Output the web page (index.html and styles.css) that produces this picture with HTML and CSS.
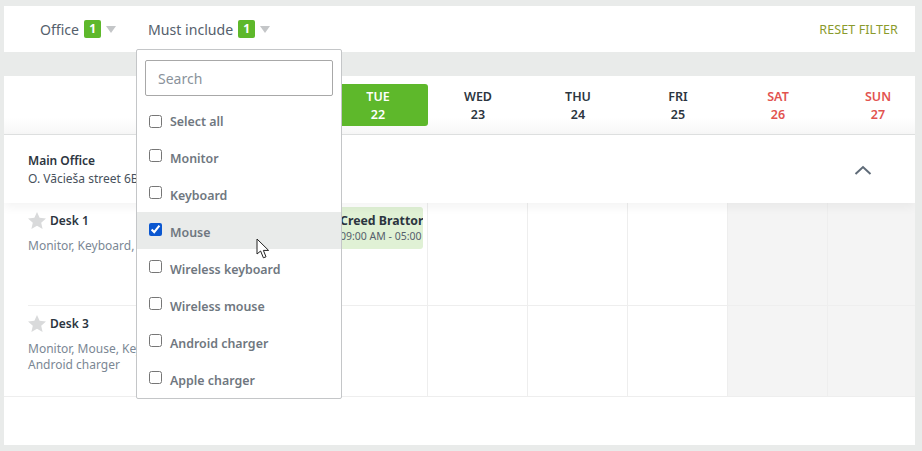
FILE: index.html
```html
<!DOCTYPE html>
<html lang="en">
    <head>
        <meta charset="UTF-8">
        <title>Desk booking</title>
        <link rel="stylesheet" href="styles.css">
    </head>
    <body>
        <div class="filters">
            <div class="filter">Office <span class="count">1</span><span class="caret"></span></div>
            <div class="filter">Must include <span class="count">1</span><span class="caret"></span></div>
            <a class="reset">RESET FILTER</a>
        </div>

        <div class="board">
            <div class="days">
                <div class="day-spacer"></div>
                <div class="day">MON<br>21</div>
                <div class="day today">TUE<br>22</div>
                <div class="day">WED<br>23</div>
                <div class="day">THU<br>24</div>
                <div class="day">FRI<br>25</div>
                <div class="day weekend">SAT<br>26</div>
                <div class="day weekend">SUN<br>27</div>
            </div>

            <div class="office">
                <div>
                    <div class="office-name">Main Office</div>
                    <div class="office-address">O. Vācieša street 6B</div>
                </div>
                <svg class="chevron" width="18" height="10" viewBox="0 0 18 10"><path d="M1.5 9 L9 2 L16.5 9" fill="none" stroke="#5f6b78" stroke-width="2"/></svg>
            </div>

            <div class="desk desk-first">
                <div class="desk-info">
                    <div class="desk-name"><svg class="star" width="18" height="17" viewBox="0 0 18 17"><path d="M9 0 L11.6 5.8 L18 6.5 L13.2 10.7 L14.6 17 L9 13.7 L3.4 17 L4.8 10.7 L0 6.5 L6.4 5.8 Z" fill="#d9dadb"/></svg><span class="desk-label">Desk 1</span></div>
                    <div class="desk-items">Monitor, Keyboard, Mouse</div>
                </div>
                <div class="cell"></div>
                <div class="cell">
                    <div class="booking">
                        <div class="booking-name">Creed Brattor</div>
                        <div class="booking-time">09:00 AM - 05:00</div>
                    </div>
                </div>
                <div class="cell"></div>
                <div class="cell"></div>
                <div class="cell"></div>
                <div class="cell off"></div>
                <div class="cell off"></div>
            </div>

            <div class="desk desk-last">
                <div class="desk-info">
                    <div class="desk-name"><svg class="star" width="18" height="17" viewBox="0 0 18 17"><path d="M9 0 L11.6 5.8 L18 6.5 L13.2 10.7 L14.6 17 L9 13.7 L3.4 17 L4.8 10.7 L0 6.5 L6.4 5.8 Z" fill="#d9dadb"/></svg><span class="desk-label">Desk 3</span></div>
                    <div class="desk-items">Monitor, Mouse, Keyboard,<br>Android charger</div>
                </div>
                <div class="cell"></div>
                <div class="cell"></div>
                <div class="cell"></div>
                <div class="cell"></div>
                <div class="cell"></div>
                <div class="cell off"></div>
                <div class="cell off"></div>
            </div>
        </div>

        <div class="dropdown">
            <div class="search-wrap">
                <input class="search" type="text" placeholder="Search">
            </div>
            <label class="option option-all"><input type="checkbox">Select all</label>
            <label class="option"><input type="checkbox">Monitor</label>
            <label class="option"><input type="checkbox">Keyboard</label>
            <label class="option active"><input type="checkbox" checked>Mouse</label>
            <label class="option"><input type="checkbox">Wireless keyboard</label>
            <label class="option"><input type="checkbox">Wireless mouse</label>
            <label class="option"><input type="checkbox">Android charger</label>
            <label class="option"><input type="checkbox">Apple charger</label>
        </div>

        <svg class="pointer" width="14" height="21" viewBox="0 0 14 21"><path d="M1 1 L1 16 L4.6 13 L7.4 19.8 L10 18.8 L7.4 12.4 L12.6 12.4 Z" fill="#fff" stroke="#222" stroke-width="1"/></svg>
    </body>
</html>
```

FILE: styles.css
```css
* {
    box-sizing: border-box;
}

body {
    margin: 0;
    padding: 6px 7px 6px 4px;
    height: 451px;
    overflow: hidden;
    background: #e9ebea;
    font-family: "Noto Sans", sans-serif;
    font-size: 12px;
    color: #2c3540;
}

.filters {
    display: flex;
    align-items: center;
    height: 46px;
    padding: 0 17px 0 36px;
    background: white;
}
.filter {
    display: flex;
    align-items: center;
    margin-right: 32px;
    font-size: 14.1px;
    color: #55606c;
}
.count {
    width: 17px;
    margin-left: 5px;
    height: 18px;
    line-height: 18px;
    text-align: center;
    border-radius: 2px;
    background: #5eb82b;
    color: white;
    font-size: 12px;
    font-weight: 700;
}
.caret {
    margin-left: 5px;
    border-left: 5.5px solid transparent;
    border-right: 5.5px solid transparent;
    border-top: 7px solid #c4c6c8;
}
.reset {
    margin-left: auto;
    font-size: 12.5px;
    letter-spacing: 0.1px;
    color: #8a9a2c;
}

.board {
    margin-top: 24px;
    height: 369px;
    overflow: hidden;
    background: white;
}

.days, .desk {
    display: grid;
    grid-template-columns: 224px repeat(7, 100px);
}
.days {
    height: 59px;
    padding-top: 8px;
    border-bottom: 1px solid #dfe1e1;
    background: linear-gradient(white 42px, #f7f7f7);
}
.day {
    height: 42px;
    padding-top: 4px;
    text-align: center;
    font-size: 12.5px;
    line-height: 18px;
    font-weight: 600;
    border-radius: 3px;
}
.today {
    background: #5eb82b;
    color: white;
}
.weekend {
    color: #e2534f;
}

.office {
    position: relative;
    display: flex;
    justify-content: space-between;
    align-items: center;
    height: 68px;
    padding: 2px 43px 0 24px;
    line-height: 18px;
    box-shadow: 0 4px 10px rgba(0, 0, 0, 0.05);
}
.office-name {
    font-weight: 600;
}
.office-address {
    color: #47515c;
}

.desk-first {
    height: 103px;
}
.desk-last {
    height: 91px;
    border-bottom: 1px solid #eeeeee;
}
.desk-info {
    margin-left: 24px;
    padding-top: 8px;
    border-bottom: 1px solid #eeeeee;
    line-height: 16px;
    color: #7b8794;
}
.desk-last .desk-info, .desk-last .cell {
    border-bottom: 0;
}
.desk-name {
    display: flex;
    align-items: center;
    gap: 4px;
    margin-bottom: 9px;
    height: 18px;
    font-weight: 600;
    color: #2c3540;
}
.desk-label {
    padding-top: 2px;
}
.cell {
    padding: 4px 4px 0 0;
    border-right: 1px solid #eeeeee;
    border-bottom: 1px solid #eeeeee;
}
.off {
    background: #f4f4f4;
}
.booking {
    height: 42px;
    padding: 6px 0 0 12px;
    border-radius: 3px;
    background: #e0f1d5;
    overflow: hidden;
    white-space: nowrap;
}
.booking-name {
    font-weight: 700;
    font-size: 12.3px;
    line-height: 16px;
}
.booking-time {
    font-size: 10.5px;
    line-height: 14px;
    color: #55606c;
}

.dropdown {
    position: absolute;
    left: 136px;
    top: 49px;
    width: 206px;
    height: 350px;
    background: white;
    border: 1px solid #c4c6c8;
    border-radius: 2px;
    overflow: hidden;
}
.search-wrap {
    height: 51px;
    padding: 10px 8px 0;
}
.search {
    display: block;
    width: 100%;
    height: 36px;
    padding: 0 12px;
    border: 1px solid #a8a8a8;
    border-radius: 2px;
    font: 14px "Noto Sans", sans-serif;
    outline: none;
}
.search::placeholder {
    color: #8a929b;
}
.option {
    display: flex;
    align-items: flex-start;
    height: 37px;
    padding: 11px 0 0 12px;
    font-size: 12.4px;
    line-height: 20px;
    font-weight: 600;
    color: #6f7780;
}
.option input {
    width: 13px;
    height: 13px;
    margin: 0 8px 0 0;
    accent-color: #0b57d0;
}
.option-all input {
    margin-top: 3px;
}
.active {
    background: #e9ebea;
}

.pointer {
    position: absolute;
    left: 256px;
    top: 238px;
}
```
